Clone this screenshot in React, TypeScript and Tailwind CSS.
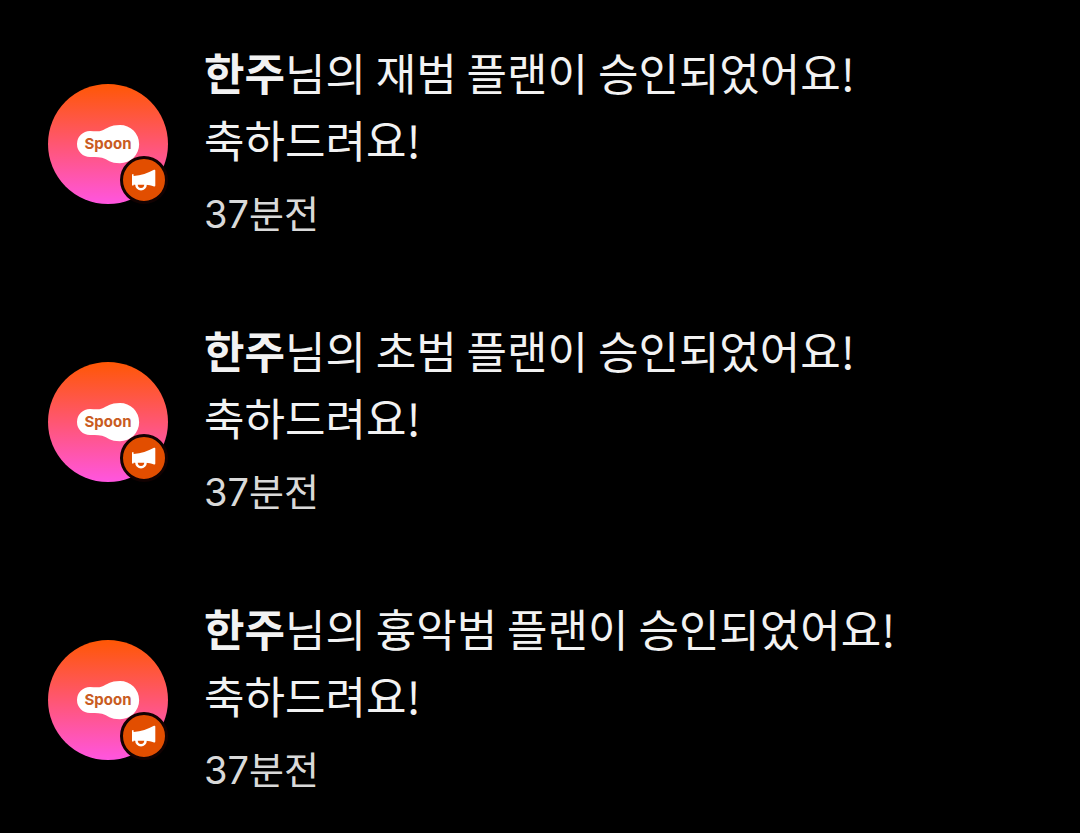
type Notice = {
  id: number;
  name: string;
  plan: string;
  time: string;
};

const NOTICES: Notice[] = [
  { id: 1, name: '한주', plan: '재범', time: '37분전' },
  { id: 2, name: '한주', plan: '초범', time: '37분전' },
  { id: 3, name: '한주', plan: '흉악범', time: '37분전' },
];

function SpoonLogo() {
  return (
    <svg viewBox="0 0 120 120" className="w-full h-full" role="img" aria-label="Spoon">
      <path
        d="M42 47 C46 47 50 48 54 46.5 C59 44.5 62 41 72 41 A19 19 0 0 1 72 79.3 C62 79.3 60 75.5 54 73.8 C50 72.6 46 73 42 73 A13 13 0 0 1 42 47 Z"
        fill="#fff"
      />
      <text
        x="60"
        y="65"
        textAnchor="middle"
        fill="#c95c22"
        className="font-['Inter',sans-serif] font-bold text-[15px]"
      >
        Spoon
      </text>
    </svg>
  );
}

function MegaphoneIcon() {
  return (
    <svg viewBox="0 0 42 42" className="w-full h-full" aria-hidden="true">
      <path
        d="M9 15.2 H10.6 V17 C18 16.6 25 14 31 10.8 C31.8 10.4 32.3 10.8 32.3 11.6 V26.6 C32.3 27.4 31.8 27.6 31 27.4 C28 26.4 25.6 26 23 25.8 H10.6 V26.4 H9 Z"
        fill="#fff"
      />
      <path d="M13.4 25 C13.4 32 22.6 32 22.6 25" fill="none" stroke="#fff" strokeWidth="2.6" />
    </svg>
  );
}

function Avatar() {
  return (
    <div className="relative w-[120px] h-[120px] flex-shrink-0 rounded-full bg-linear-to-b/srgb from-[#ff5704] to-[#ff55e0]">
      <SpoonLogo />
      <span className="absolute right-0 bottom-0 w-12 h-12 rounded-full border-3 border-[#120202] bg-[#e24e00]">
        <MegaphoneIcon />
      </span>
    </div>
  );
}

function NoticeItem({ notice }: { notice: Notice }) {
  return (
    <li className="flex items-center gap-9">
      <Avatar />
      <div className="flex-1 min-w-0">
        <p className="text-[44px] leading-[67px] text-[#f2f2f2]">
          <strong className="font-bold">{notice.name}</strong>님의 {notice.plan} 플랜이 승인되었어요!
          <br />
          축하드려요!
        </p>
        <p className="mt-1.5 font-['Inter','Noto_Sans_CJK_KR',sans-serif] text-[38px] leading-[70px] text-[#d9d9d9]">
          {notice.time}
        </p>
      </div>
    </li>
  );
}

export default function App() {
  return (
    <main className="min-h-screen bg-black font-['Noto_Sans_CJK_KR',sans-serif]">
      <ul className="flex flex-col gap-[68px] px-12 pt-[39px] pb-6">
        {NOTICES.map(notice => (
          <NoticeItem key={notice.id} notice={notice} />
        ))}
      </ul>
    </main>
  );
}
